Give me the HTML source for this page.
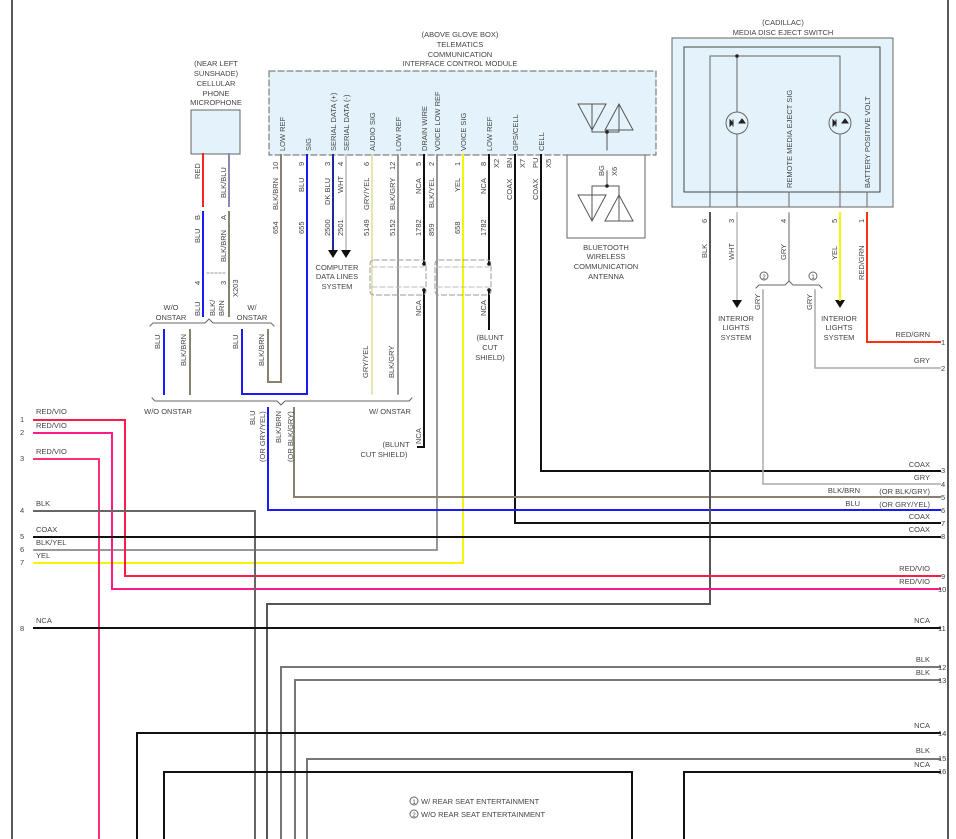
<!DOCTYPE html>
<html><head><meta charset="utf-8"><style>
html,body{margin:0;padding:0;background:#fff}
svg{display:block}
text{font-family:"Liberation Sans",sans-serif;font-size:7.5px;fill:#444}
</style></head><body>
<svg width="956" height="839" viewBox="0 0 956 839" xmlns="http://www.w3.org/2000/svg">
<g fill="none" stroke-linecap="square">
<line x1="12" y1="0" x2="12" y2="839" stroke="#222" stroke-width="1.5"/>
<line x1="948" y1="0" x2="948" y2="839" stroke="#222" stroke-width="1.5"/>

<rect x="269" y="71" width="387" height="84" fill="#e4f3fb" stroke="#666" stroke-dasharray="6,3"/>
<rect x="567" y="155" width="78" height="83" stroke="#666"/>
<rect x="191" y="110" width="49" height="44" fill="#e4f3fb" stroke="#666"/>
<rect x="672" y="38" width="221" height="169" fill="#e4f3fb" stroke="#666"/>
<rect x="684" y="47" width="196" height="145" stroke="#444"/>
<polyline points="710,207 710,56 840,56 840,207" stroke="#666"/>
<line x1="737" y1="56" x2="737" y2="207" stroke="#666"/>
<line x1="789" y1="192" x2="789" y2="207" stroke="#666"/>
<line x1="867" y1="192" x2="867" y2="207" stroke="#666"/>
<circle cx="737" cy="56" r="1.8" fill="#222" stroke="none"/>
<circle cx="737" cy="123" r="11" stroke="#666" fill="#e4f3fb"/>
<circle cx="840" cy="123" r="11" stroke="#666" fill="#e4f3fb"/>
<path d="M733,123 l-3,-3 v6z M733,120 v6" stroke="#222" fill="#222"/>
<path d="M742,119 l-3,4 h6z" fill="#222" stroke="#222"/>
<path d="M836,123 l-3,-3 v6z M836,120 v6" stroke="#222" fill="#222"/>
<path d="M845,119 l-3,4 h6z" fill="#222" stroke="#222"/>

<path d="M578,104 h28 l-14,26z M592,104 v26 M605,130 l14,-26 l14,26z M619,104 v26 M592,120 v12 h27 v-2 M607,132 v18" stroke="#555"/>
<circle cx="607" cy="132" r="1.8" fill="#222" stroke="none"/>
<path d="M578,195 h28 l-14,26z M592,195 v26 M605,221 l14,-26 l14,26z M619,195 v26 M592,205 v-19 h27 v19 M607,186 v-15" stroke="#555"/>
<circle cx="607" cy="186" r="1.8" fill="#222" stroke="none"/>

<polyline points="281,155 281,382 268,382 268,330" stroke="#8a8070" stroke-width="2"/>
<polyline points="307,155 307,394 242,394 242,330" stroke="#1a1aff" stroke-width="2"/>
<line x1="333" y1="155" x2="333" y2="250" stroke="#1a2a9a" stroke-width="2"/>
<line x1="346" y1="155" x2="346" y2="250" stroke="#ccc" stroke-width="2"/>
<path d="M328,250 h10 l-5,8z M341,250 h10 l-5,8z" fill="#111" stroke="none"/>
<line x1="372" y1="155" x2="372" y2="394" stroke="#dede9a" stroke-width="1.5"/>
<line x1="398" y1="155" x2="398" y2="394" stroke="#777" stroke-width="1.5"/>
<line x1="424" y1="155" x2="424" y2="264" stroke="#111" stroke-width="2"/>
<polyline points="424,290 424,447 418,447" stroke="#111" stroke-width="2"/>
<polyline points="437,155 437,550 34,550" stroke="#777" stroke-width="1.5"/>
<polyline points="463,155 463,563 34,563" stroke="#f5f500" stroke-width="2"/>
<line x1="489" y1="155" x2="489" y2="264" stroke="#111" stroke-width="2"/>
<line x1="489" y1="290" x2="489" y2="329" stroke="#111" stroke-width="2"/>
<polyline points="515,155 515,523 940,523" stroke="#111" stroke-width="2"/>
<polyline points="541,155 541,471 940,471" stroke="#111" stroke-width="2"/>
<circle cx="424" cy="264" r="1.8" fill="#111" stroke="none"/>
<circle cx="424" cy="290" r="1.8" fill="#111" stroke="none"/>
<circle cx="489" cy="264" r="1.8" fill="#111" stroke="none"/>
<circle cx="489" cy="290" r="1.8" fill="#111" stroke="none"/>
<rect x="370" y="260" width="56" height="35" rx="4" stroke="#999" stroke-dasharray="5,3"/>
<line x1="372" y1="267" x2="424" y2="267" stroke="#bbb" stroke-dasharray="5,3"/>
<line x1="372" y1="287" x2="424" y2="287" stroke="#bbb" stroke-dasharray="5,3"/>
<rect x="435" y="260" width="56" height="35" rx="4" stroke="#999" stroke-dasharray="5,3"/>
<line x1="437" y1="267" x2="489" y2="267" stroke="#bbb" stroke-dasharray="5,3"/>
<line x1="437" y1="287" x2="489" y2="287" stroke="#bbb" stroke-dasharray="5,3"/>

<line x1="203" y1="154" x2="203" y2="206" stroke="#ff2020" stroke-width="2"/>
<line x1="203" y1="212" x2="203" y2="316" stroke="#1a1aff" stroke-width="2"/>
<line x1="229" y1="154" x2="229" y2="206" stroke="#8a8ab0" stroke-width="2"/>
<line x1="229" y1="212" x2="229" y2="316" stroke="#8a8070" stroke-width="2"/>
<line x1="207" y1="273" x2="225" y2="273" stroke="#999" stroke-dasharray="2,2"/>
<path d="M150,326 l3,-3 h52 l4,-4 l4,4 h58 l3,3" stroke="#666"/>
<line x1="164" y1="330" x2="164" y2="394" stroke="#1a1aff" stroke-width="2"/>
<line x1="190" y1="330" x2="190" y2="394" stroke="#8a8070" stroke-width="2"/>
<path d="M152,398 l3,3 h122 l4,4 l4,-4 h124 l3,-3" stroke="#666"/>
<polyline points="268,408 268,510 940,510" stroke="#1a1aff" stroke-width="2"/>
<polyline points="294,408 294,497 940,497" stroke="#8a8070" stroke-width="2"/>

<polyline points="710,213 710,604 267,604 267,839" stroke="#555" stroke-width="2"/>
<line x1="737" y1="213" x2="737" y2="300" stroke="#ccc" stroke-width="2"/>
<path d="M732,300 h10 l-5,8z M835,300 h10 l-5,8z" fill="#111" stroke="none"/>
<line x1="789" y1="213" x2="789" y2="280" stroke="#999" stroke-width="1.5"/>
<path d="M756,288 l3,-3 h26 l4,-4 l4,4 h26 l3,3" stroke="#666"/>
<polyline points="763,290 763,484 940,484" stroke="#aaa" stroke-width="1.5"/>
<polyline points="815,290 815,368 940,368" stroke="#aaa" stroke-width="1.5"/>
<line x1="840" y1="213" x2="840" y2="300" stroke="#f5f500" stroke-width="2"/>
<polyline points="867,213 867,342 940,342" stroke="#ff3010" stroke-width="2"/>

<polyline points="34,420 125,420 125,576 940,576" stroke="#ff1a4a" stroke-width="2"/>
<polyline points="34,433 112,433 112,589 940,589" stroke="#ff1a8a" stroke-width="2"/>
<polyline points="34,459 99,459 99,839" stroke="#ff3070" stroke-width="2"/>
<polyline points="34,511 255,511 255,839" stroke="#666" stroke-width="2"/>
<line x1="34" y1="537" x2="940" y2="537" stroke="#111" stroke-width="2"/>
<line x1="34" y1="628" x2="940" y2="628" stroke="#111" stroke-width="2"/>
<polyline points="940,667 281,667 281,839" stroke="#777" stroke-width="2"/>
<polyline points="940,680 295,680 295,839" stroke="#777" stroke-width="2"/>
<polyline points="940,733 137,733 137,839" stroke="#111" stroke-width="2"/>
<polyline points="940,759 307,759 307,839" stroke="#777" stroke-width="2"/>
<polyline points="164,839 164,772 632,772 632,839" stroke="#111" stroke-width="2"/>
<polyline points="684,839 684,772 940,772" stroke="#111" stroke-width="2"/>
</g>

<g text-anchor="middle">
<text x="460" y="37">(ABOVE GLOVE BOX)</text>
<text x="460" y="47">TELEMATICS</text>
<text x="460" y="57">COMMUNICATION</text>
<text x="460" y="66">INTERFACE CONTROL MODULE</text>
<text x="216" y="66">(NEAR LEFT</text>
<text x="216" y="76">SUNSHADE)</text>
<text x="216" y="86">CELLULAR</text>
<text x="216" y="96">PHONE</text>
<text x="216" y="105">MICROPHONE</text>
<text x="783" y="25">(CADILLAC)</text>
<text x="783" y="35">MEDIA DISC EJECT SWITCH</text>
<text x="606" y="250">BLUETOOTH</text>
<text x="606" y="259">WIRELESS</text>
<text x="606" y="269">COMMUNICATION</text>
<text x="606" y="279">ANTENNA</text>
<text x="337" y="270">COMPUTER</text>
<text x="337" y="279">DATA LINES</text>
<text x="337" y="289">SYSTEM</text>
<text x="736" y="321">INTERIOR</text>
<text x="736" y="330">LIGHTS</text>
<text x="736" y="340">SYSTEM</text>
<text x="839" y="321">INTERIOR</text>
<text x="839" y="330">LIGHTS</text>
<text x="839" y="340">SYSTEM</text>
<text x="490" y="340">(BLUNT</text>
<text x="490" y="350">CUT</text>
<text x="490" y="360">SHIELD)</text>
<text x="171" y="310">W/O</text>
<text x="171" y="320">ONSTAR</text>
<text x="252" y="310">W/</text>
<text x="252" y="320">ONSTAR</text>
<text x="168" y="414">W/O ONSTAR</text>
<text x="390" y="414">W/ ONSTAR</text>
<text x="396" y="447">(BLUNT</text>
<text x="384" y="457">CUT SHIELD)</text>
</g>

<g>
<text transform="translate(285,151) rotate(-90)">LOW REF</text>
<text transform="translate(311,151) rotate(-90)">SIG</text>
<text transform="translate(336,151) rotate(-90)">SERIAL DATA (+)</text>
<text transform="translate(349,151) rotate(-90)">SERIAL DATA (-)</text>
<text transform="translate(375,151) rotate(-90)">AUDIO SIG</text>
<text transform="translate(401,151) rotate(-90)">LOW REF</text>
<text transform="translate(427,151) rotate(-90)">DRAIN WIRE</text>
<text transform="translate(440,151) rotate(-90)">VOICE LOW REF</text>
<text transform="translate(466,151) rotate(-90)">VOICE SIG</text>
<text transform="translate(492,151) rotate(-90)">LOW REF</text>
<text transform="translate(518,151) rotate(-90)">GPS/CELL</text>
<text transform="translate(544,151) rotate(-90)">CELL</text>
<text transform="translate(792,188) rotate(-90)">REMOTE MEDIA EJECT SIG</text>
<text transform="translate(870,188) rotate(-90)">BATTERY POSITIVE VOLT</text>

<text transform="translate(278,170) rotate(-90)">10</text>
<text transform="translate(278,210) rotate(-90)">BLK/BRN</text>
<text transform="translate(278,234) rotate(-90)">654</text>
<text transform="translate(304,166) rotate(-90)">9</text>
<text transform="translate(304,192) rotate(-90)">BLU</text>
<text transform="translate(304,234) rotate(-90)">655</text>
<text transform="translate(330,166) rotate(-90)">3</text>
<text transform="translate(330,205) rotate(-90)">DK BLU</text>
<text transform="translate(330,236) rotate(-90)">2500</text>
<text transform="translate(343,166) rotate(-90)">4</text>
<text transform="translate(343,193) rotate(-90)">WHT</text>
<text transform="translate(343,236) rotate(-90)">2501</text>
<text transform="translate(369,166) rotate(-90)">6</text>
<text transform="translate(369,210) rotate(-90)">GRY/YEL</text>
<text transform="translate(369,236) rotate(-90)">5149</text>
<text transform="translate(395,170) rotate(-90)">12</text>
<text transform="translate(395,210) rotate(-90)">BLK/GRY</text>
<text transform="translate(395,236) rotate(-90)">5152</text>
<text transform="translate(421,166) rotate(-90)">5</text>
<text transform="translate(421,194) rotate(-90)">NCA</text>
<text transform="translate(421,236) rotate(-90)">1782</text>
<text transform="translate(434,166) rotate(-90)">2</text>
<text transform="translate(434,208) rotate(-90)">BLK/YEL</text>
<text transform="translate(434,236) rotate(-90)">859</text>
<text transform="translate(460,166) rotate(-90)">1</text>
<text transform="translate(460,192) rotate(-90)">YEL</text>
<text transform="translate(460,234) rotate(-90)">658</text>
<text transform="translate(486,166) rotate(-90)">8</text>
<text transform="translate(486,194) rotate(-90)">NCA</text>
<text transform="translate(486,236) rotate(-90)">1782</text>
<text transform="translate(499,168) rotate(-90)">X2</text>
<text transform="translate(512,168) rotate(-90)">BN</text>
<text transform="translate(512,200) rotate(-90)">COAX</text>
<text transform="translate(525,168) rotate(-90)">X7</text>
<text transform="translate(538,168) rotate(-90)">PU</text>
<text transform="translate(538,200) rotate(-90)">COAX</text>
<text transform="translate(551,168) rotate(-90)">X5</text>
<text transform="translate(604,176) rotate(-90)">BG</text>
<text transform="translate(617,176) rotate(-90)">X6</text>
<text transform="translate(421,316) rotate(-90)">NCA</text>
<text transform="translate(486,316) rotate(-90)">NCA</text>
<text transform="translate(421,444) rotate(-90)">NCA</text>

<text transform="translate(200,179) rotate(-90)">RED</text>
<text transform="translate(226,198) rotate(-90)">BLK/BLU</text>
<text transform="translate(200,220) rotate(-90)">B</text>
<text transform="translate(226,220) rotate(-90)">A</text>
<text transform="translate(200,243) rotate(-90)">BLU</text>
<text transform="translate(226,262) rotate(-90)">BLK/BRN</text>
<text transform="translate(200,285) rotate(-90)">4</text>
<text transform="translate(226,285) rotate(-90)">3</text>
<text transform="translate(238,297) rotate(-90)">X203</text>
<text transform="translate(200,316) rotate(-90)">BLU</text>
<text transform="translate(215,316) rotate(-90)">BLK/</text>
<text transform="translate(224,316) rotate(-90)">BRN</text>
<text transform="translate(160,349) rotate(-90)">BLU</text>
<text transform="translate(186,366) rotate(-90)">BLK/BRN</text>
<text transform="translate(238,349) rotate(-90)">BLU</text>
<text transform="translate(264,366) rotate(-90)">BLK/BRN</text>
<text transform="translate(368,378) rotate(-90)">GRY/YEL</text>
<text transform="translate(394,378) rotate(-90)">BLK/GRY</text>
<text transform="translate(255,425) rotate(-90)">BLU</text>
<text transform="translate(265,462) rotate(-90)">(OR GRY/YEL)</text>
<text transform="translate(281,443) rotate(-90)">BLK/BRN</text>
<text transform="translate(293,462) rotate(-90)">(OR BLK/GRY)</text>

<text transform="translate(707,223) rotate(-90)">6</text>
<text transform="translate(707,258) rotate(-90)">BLK</text>
<text transform="translate(734,223) rotate(-90)">3</text>
<text transform="translate(734,260) rotate(-90)">WHT</text>
<text transform="translate(786,223) rotate(-90)">4</text>
<text transform="translate(786,260) rotate(-90)">GRY</text>
<text transform="translate(837,223) rotate(-90)">5</text>
<text transform="translate(837,260) rotate(-90)">YEL</text>
<text transform="translate(864,223) rotate(-90)">1</text>
<text transform="translate(864,280) rotate(-90)">RED/GRN</text>
<text transform="translate(760,310) rotate(-90)">GRY</text>
<text transform="translate(812,310) rotate(-90)">GRY</text>
</g>
<g stroke="#666" fill="none"><circle cx="764" cy="276" r="4"/><circle cx="813" cy="276" r="4"/><circle cx="414" cy="801" r="4"/><circle cx="414" cy="814" r="4"/></g>
<g text-anchor="middle"><text x="764" y="279" style="font-size:6px">2</text><text x="813" y="279" style="font-size:6px">1</text><text x="414" y="804" style="font-size:6px">1</text><text x="414" y="817" style="font-size:6px">2</text></g>
<text x="421" y="804">W/ REAR SEAT ENTERTAINMENT</text>
<text x="421" y="817">W/O REAR SEAT ENTERTAINMENT</text>

<g>
<text x="20" y="422">1</text><text x="36" y="414">RED/VIO</text>
<text x="20" y="435">2</text><text x="36" y="428">RED/VIO</text>
<text x="20" y="461">3</text><text x="36" y="454">RED/VIO</text>
<text x="20" y="513">4</text><text x="36" y="506">BLK</text>
<text x="20" y="539">5</text><text x="36" y="532">COAX</text>
<text x="20" y="552">6</text><text x="36" y="545">BLK/YEL</text>
<text x="20" y="565">7</text><text x="36" y="558">YEL</text>
<text x="20" y="631">8</text><text x="36" y="623">NCA</text>
</g>
<g text-anchor="end">
<text x="930" y="337">RED/GRN</text>
<text x="930" y="363">GRY</text>
<text x="930" y="467">COAX</text>
<text x="930" y="480">GRY</text>
<text x="860" y="493">BLK/BRN</text><text x="930" y="494">(OR BLK/GRY)</text>
<text x="860" y="506">BLU</text><text x="930" y="507">(OR GRY/YEL)</text>
<text x="930" y="519">COAX</text>
<text x="930" y="532">COAX</text>
<text x="930" y="571">RED/VIO</text>
<text x="930" y="584">RED/VIO</text>
<text x="930" y="623">NCA</text>
<text x="930" y="662">BLK</text>
<text x="930" y="675">BLK</text>
<text x="930" y="728">NCA</text>
<text x="930" y="753">BLK</text>
<text x="930" y="767">NCA</text>
</g>
<g>
<text x="941" y="345">1</text><text x="941" y="371">2</text>
<text x="941" y="473">3</text><text x="941" y="487">4</text>
<text x="941" y="500">5</text><text x="941" y="513">6</text>
<text x="941" y="526">7</text><text x="941" y="539">8</text>
<text x="941" y="579">9</text><text x="938" y="592">10</text>
<text x="938" y="631">11</text><text x="938" y="670">12</text>
<text x="938" y="683">13</text><text x="938" y="736">14</text>
<text x="938" y="761">15</text><text x="938" y="774">16</text>
</g>
</svg>
</body></html>
